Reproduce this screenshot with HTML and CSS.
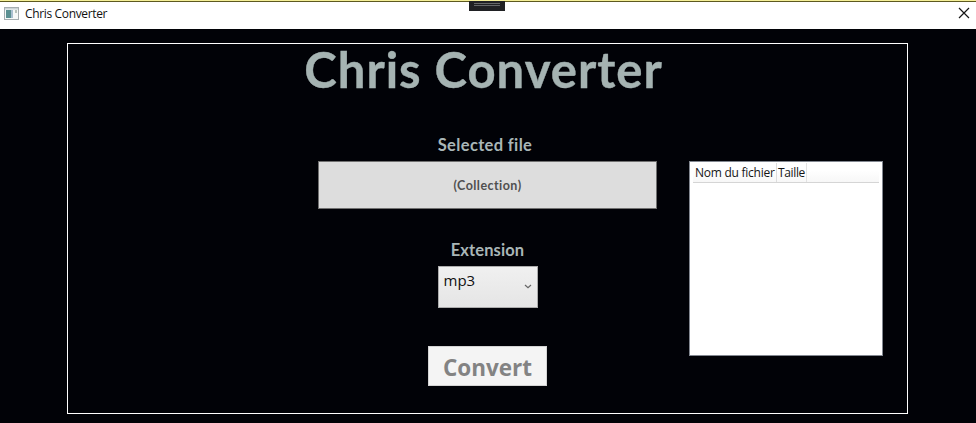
FILE: index.html
```
<!DOCTYPE html>
<html lang="en">
<head>
<meta charset="utf-8">
<title>Chris Converter</title>
<link rel="stylesheet" href="styles.css">
</head>
<body>
<div class="window">
  <div class="debug-handle"><span></span></div>
  <header class="titlebar">
    <svg class="app-icon" width="15" height="13" viewBox="0 0 15 13">
      <rect x=".5" y=".5" width="14" height="12" fill="#f5f8f8" stroke="#a5adb0"/>
      <rect x="1" y="1" width="13" height="1.5" fill="#cbd3d5"/>
      <rect x="2" y="3" width="5" height="8" fill="#5b9092"/>
      <rect x="7" y="3" width="2" height="8" fill="#a8bfd0"/>
      <rect x="11" y="3" width="2" height="3" fill="#b6c1ba"/>
    </svg>
    <span class="caption">Chris Converter</span>
    <svg class="close" width="12" height="12" viewBox="0 0 12 12"><path d="M1 1L11 11M11 1L1 11" stroke="#151515" stroke-width="1.2"/></svg>
  </header>
  <main class="client">
    <section class="frame">
      <h1 class="title"><span>Chris Converter</span></h1>
      <div class="form">
        <label class="label selected-label">Selected file</label>
        <div class="file-button">(Collection)</div>
        <label class="label extension-label">Extension</label>
        <div class="combo"><span>mp3</span>
          <svg width="8" height="5" viewBox="0 0 8 5"><path d="M1 1L4 3.7L7 1" fill="none" stroke="#666" stroke-width="1.2"/></svg>
        </div>
        <div class="convert">Convert</div>
      </div>
      <div class="list">
        <div class="list-head"><span class="col-name">Nom du fichier</span><span class="col-size">Taille</span></div>
      </div>
    </section>
  </main>
</div>
</body>
</html>
```
FILE: styles.css
```
* { box-sizing: border-box; }
body { margin: 0; background: #010207; }
.window { position: relative; width: 976px; height: 423px; display: flex; flex-direction: column; border-top: 1px solid #f5ef98; overflow: hidden; }
.debug-handle { position: absolute; left: 469px; top: -1px; width: 36px; height: 12px; background: #202124; padding: 3px 5px; }
.debug-handle span { display: block; height: 3px; border: solid #66686a; border-width: 1px 0; }
.titlebar { height: 28px; flex: none; background: #fff; border-top: 1px solid #5e5a20; display: flex; align-items: center; padding: 0 6px 4px 4px; }
.app-icon { margin-top: -1px; }
.debug-handle { height: 11px; }
.caption { margin: 1px 0 0 6px; flex: 1; font: 12px/16px "Open Sans", sans-serif; letter-spacing: -.35px; color: #111; }
.close { margin-top: -1px; }
.client { flex: 1; background: #010207; padding: 14px 68px 9px 67px; }
.frame { height: 371px; border: 1px solid #fff; display: grid; grid-template-columns: 1fr 339px 1fr; grid-template-rows: 88px 1fr; }
.title { grid-column: 1 / -1; margin: -3px 0 0; text-align: center; font: 700 49px/56px Lato, sans-serif; letter-spacing: 1px; color: #a5b3b2; -webkit-text-stroke: .4px #a5b3b2; padding-right: 8px; white-space: nowrap; }
.form { grid-column: 2; display: flex; flex-direction: column; align-items: center; }
.label { font: 700 16.5px/20px Lato, sans-serif; letter-spacing: .35px; color: #a9b6b7; white-space: nowrap; }
.selected-label { margin: 3px 5px 0 0; }
.file-button { width: 339px; height: 48px; margin-top: 6px; background: #ddd; border: 1px solid #707070; display: flex; align-items: center; justify-content: center; padding-top: 2px; font: 700 12.5px/16px Lato, sans-serif; letter-spacing: .45px; color: #505050; }
.extension-label { margin-top: 31px; letter-spacing: .1px; }
.combo { width: 100px; height: 42px; margin-top: 6px; border: 1px solid #acacac; background: linear-gradient(#f0f0f0, #e5e5e5); display: flex; justify-content: space-between; padding: 3px 5px; font: 15px/20px "Open Sans", sans-serif; color: #111; }
.combo svg { margin-top: 14px; }
.convert { width: 119px; height: 40px; margin-top: 38px; background: #f4f4f4; border: 1px solid #d4d4d4; text-align: center; font: 700 22.5px/41px "Open Sans", sans-serif; color: #838383; }
.list { grid-column: 3; width: 194px; height: 195px; margin: 29px 0 0 32px; background: #fff; border: 1px solid #828790; padding: 1px 3px 0 3px; }
.list-head { height: 20px; display: flex; background: linear-gradient(#fff 40%, #f7f7f7); border-bottom: 1px solid #d5d5d5; font: 12px/20px "Open Sans", sans-serif; color: #151515; white-space: nowrap; }
.col-name { width: 84px; padding-left: 2px; border-right: 1px solid #ddd; letter-spacing: -.25px; }
.col-size { width: 30px; padding-left: 1px; border-right: 1px solid #e2e2e2; letter-spacing: -.35px; }
```
